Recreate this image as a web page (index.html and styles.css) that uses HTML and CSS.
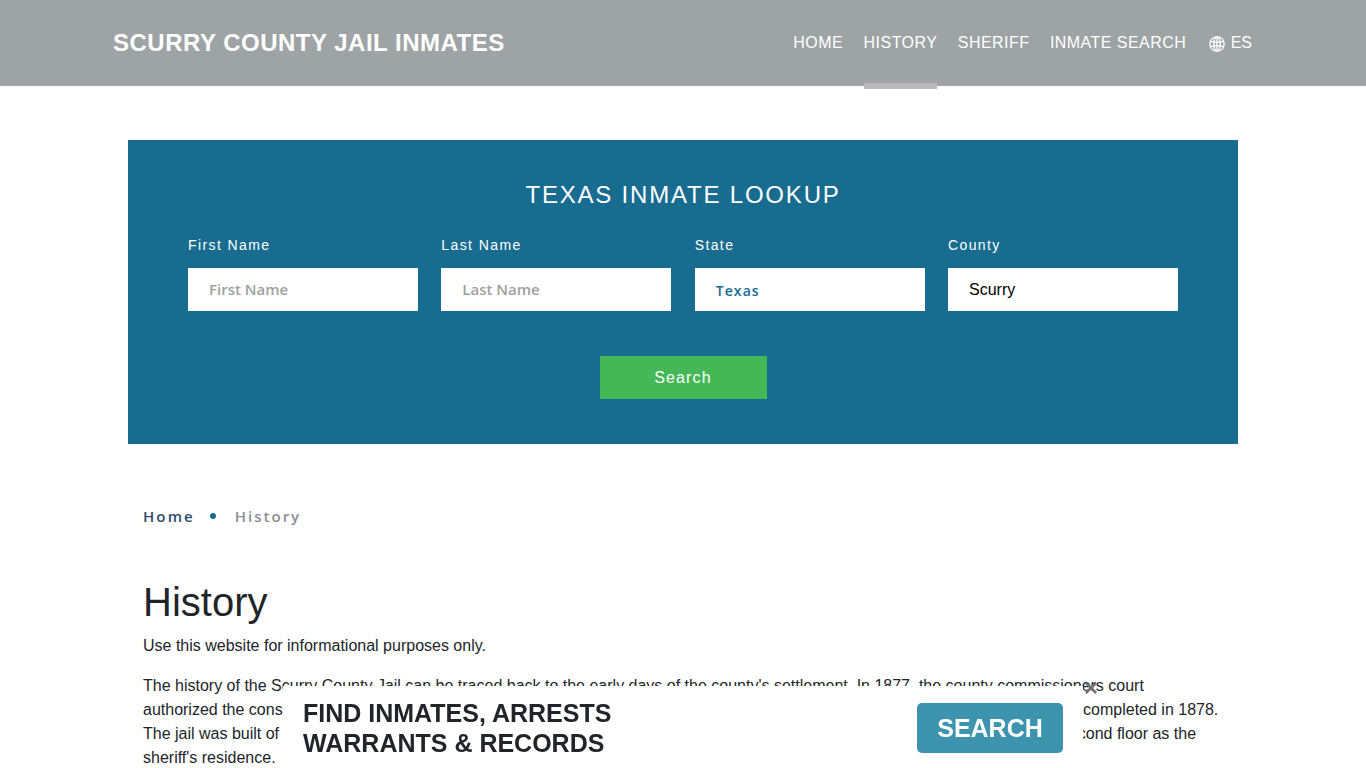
FILE: index.html
```html
<!DOCTYPE html>
<html lang="en">
<head>
  <meta charset="UTF-8">
  <meta name="viewport" content="width=device-width, initial-scale=1.0">
  <title>History - Scurry County Jail Inmates</title>
  <link rel="stylesheet" href="styles.css">
</head>
<body>
  <header class="site-header">
    <a class="brand" href="#">SCURRY COUNTY JAIL INMATES</a>
    <nav class="main-nav">
      <a href="#">HOME</a>
      <a class="active" href="#">HISTORY</a>
      <a href="#">SHERIFF</a>
      <a href="#">INMATE SEARCH</a>
      <a class="lang" href="#">
        <svg class="globe" viewBox="0 0 16 16" width="16" height="16" fill="none" stroke="#fff" stroke-width="1.3">
          <circle cx="8" cy="8" r="7.2"/>
          <ellipse cx="8" cy="8" rx="3.2" ry="7.2"/>
          <path d="M8 .8v14.4M1.4 5.4c3.6 1 9.6 1 13.2 0M1.4 10.6c3.6-1 9.6-1 13.2 0"/>
        </svg>
        ES
      </a>
    </nav>
  </header>

  <section class="lookup">
    <h2>TEXAS INMATE LOOKUP</h2>
    <form class="lookup-form">
      <div class="field">
        <label>First Name</label>
        <div class="input placeholder">First Name</div>
      </div>
      <div class="field">
        <label>Last Name</label>
        <div class="input placeholder">Last Name</div>
      </div>
      <div class="field">
        <label>State</label>
        <div class="input state">Texas</div>
      </div>
      <div class="field">
        <label>County</label>
        <div class="input county">Scurry</div>
      </div>
    </form>
    <div class="lookup-action">
      <button type="button" class="search-btn">Search</button>
    </div>
  </section>

  <main class="content">
    <ul class="breadcrumb">
      <li><a href="#">Home</a></li>
      <li class="dot"></li>
      <li class="current">History</li>
    </ul>
    <h1>History</h1>
    <p>Use this website for informational purposes only.</p>
    <p>The history of the Scurry County Jail can be traced back to the early days of the county's settlement. In 1877, the county commissioners court<br>
    authorized the construction of the first county jail, a two-story rock building on the courthouse square in Snyder, and the building was completed in 1878.<br>
    The jail was built of native limestone and held several iron cells on the ground floor, with living quarters for the county jailer on the second floor as the<br>
    sheriff's residence.</p>
  </main>

  <aside class="promo">
    <div class="promo-text">FIND INMATES, ARRESTS<br>WARRANTS &amp; RECORDS</div>
    <a class="promo-btn" href="#">SEARCH</a>
    <span class="promo-close">&times;</span>
  </aside>
</body>
</html>
```

FILE: styles.css
```css
* {
  box-sizing: border-box;
}

html, body {
  height: 768px;
  overflow: hidden;
}

body {
  margin: 0;
  font-family: "Liberation Sans", Arial, sans-serif;
  font-size: 16px;
  line-height: 24px;
  color: #212529;
  background: #fff;
}

a {
  text-decoration: none;
  color: inherit;
}

/* header */
.site-header {
  height: 86px;
  padding: 0 114px 0 113px;
  background: #9ea4a5;
  display: flex;
  align-items: center;
  justify-content: space-between;
}

.brand {
  color: #fff;
  font-size: 24px;
  font-weight: 700;
  letter-spacing: 0.5px;
}

.main-nav {
  display: flex;
  gap: 20.5px;
  color: #fff;
  letter-spacing: 0.45px;
}

.main-nav a {
  position: relative;
  display: block;
}

.main-nav a.active::after {
  content: '';
  position: absolute;
  left: 0;
  right: 0;
  top: 52px;
  height: 6px;
  background: #b9b9b9;
}

.lang {
  display: flex !important;
  align-items: center;
  gap: 6px;
  margin-left: 2px;
  letter-spacing: 0;
}

.globe {
  margin-top: 2px;
}

/* lookup */
.lookup {
  width: 1110px;
  height: 304px;
  margin: 54px auto 0;
  padding: 37px 60px 0;
  background: #176c90;
  color: #fff;
}

.lookup h2 {
  margin: 0 0 23px;
  font-size: 24px;
  font-weight: 400;
  line-height: 36px;
  letter-spacing: 1.8px;
  text-align: center;
}

.lookup-form {
  display: grid;
  grid-template-columns: repeat(4, 230px);
  column-gap: 23.33px;
}

.field label {
  display: block;
  font-size: 14px;
  line-height: 18px;
  letter-spacing: 1.4px;
  margin-bottom: 14px;
}

.input {
  height: 43px;
  padding-left: 21px;
  background: #fff;
  line-height: 43px;
}

.placeholder {
  font-family: "Open Sans", sans-serif;
  font-size: 15px;
  font-weight: 600;
  color: #a0a0a0;
}

.state {
  font-family: "Open Sans", sans-serif;
  font-size: 14px;
  font-weight: 600;
  letter-spacing: 1.1px;
  color: #176c90;
  line-height: 45px;
}

.county {
  color: #000;
}

.lookup-action {
  margin-top: 45px;
  display: flex;
  justify-content: center;
}

.search-btn {
  width: 167px;
  height: 43px;
  border: 0;
  background: #44b757;
  color: #fff;
  font-family: "Liberation Sans", Arial, sans-serif;
  font-size: 16px;
  letter-spacing: 1.1px;
}

/* content */
.content {
  width: 1110px;
  margin: 0 auto;
  padding: 0 15px;
}

.breadcrumb {
  display: flex;
  align-items: center;
  list-style: none;
  margin: 60px 0 0;
  padding: 0;
  font-family: "Open Sans", sans-serif;
  font-size: 15px;
  font-weight: 600;
  letter-spacing: 2.1px;
  color: #8a8f94;
}

.breadcrumb a {
  color: #2f4a6d;
}

.breadcrumb .current {
  letter-spacing: 2px;
}

.dot {
  width: 6px;
  height: 6px;
  margin: 0 19px 0 15px;
  border-radius: 50%;
  background: #176c90;
}

h1 {
  margin: 50px 0 8px;
  font-size: 40px;
  font-weight: 400;
  line-height: 48px;
}

p {
  margin: 0 0 16px;
}

.content p {
  white-space: nowrap;
}

/* bottom promo */
.promo {
  position: fixed;
  left: 283px;
  bottom: 0;
  width: 800px;
  height: 82px;
  padding: 12px 0 0 20px;
  background: #fff;
  display: flex;
  justify-content: space-between;
}

.promo-text {
  font-size: 25px;
  font-weight: 700;
  line-height: 30px;
}

.promo-btn {
  width: 146px;
  height: 50px;
  margin: 5px 20px 0 0;
  border-radius: 5px;
  background: #3d94ae;
  color: #fff;
  font-size: 25px;
  font-weight: 700;
  line-height: 50px;
  text-align: center;
}

.promo-close {
  position: absolute;
  right: -15px;
  top: -6px;
  color: #6c7275;
  font-size: 24px;
  font-weight: 700;
  line-height: 16px;
}
```
